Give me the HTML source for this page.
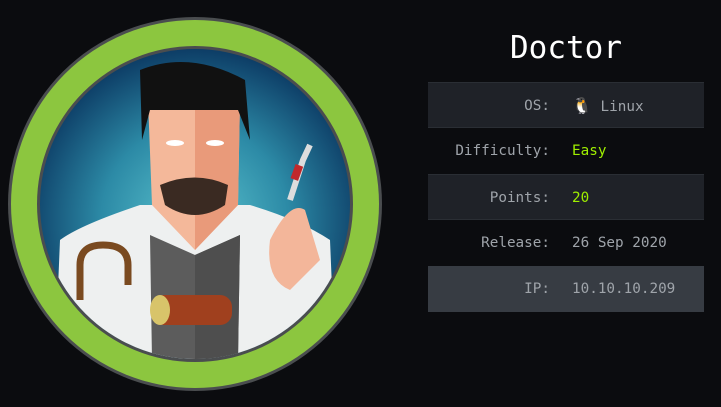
<!DOCTYPE html>
<html><head><style>
body{margin:0;width:721px;height:407px;background:#0b0c0f;overflow:hidden;font-family:"DejaVu Sans Mono","Liberation Mono",monospace;}
.t{position:absolute;left:428px;width:276px;text-align:center;top:30px;font-size:31px;color:#fff;}
.row{position:absolute;left:428px;width:276px;height:46px;font-size:14.3px;line-height:46px;color:#9fa4aa}
.row .l{position:absolute;right:154px;}
.row .v{position:absolute;left:144px;}
.g{color:#9fef00}
.d{background:#1f2228;border-top:1px solid #2a2e34;border-bottom:1px solid #2a2e34;box-sizing:border-box}
</style></head><body>
<svg width="400" height="407" style="position:absolute;left:0;top:0">
<defs>
<radialGradient id="bg" cx="50%" cy="55%" r="55%"><stop offset="0" stop-color="#5cc4cf"/><stop offset="0.55" stop-color="#2c8aa6"/><stop offset="1" stop-color="#0d3d66"/></radialGradient>
<clipPath id="c"><circle cx="195" cy="204" r="155"/></clipPath>
</defs>
<circle cx="195" cy="204" r="187" fill="#4a4d4f"/>
<circle cx="195" cy="204" r="184" fill="#8cc63f"/>
<circle cx="195" cy="204" r="158" fill="#4a4d4f"/>
<circle cx="195" cy="204" r="155" fill="url(#bg)"/>
<g clip-path="url(#c)">
<path d="M55 360 L60 240 Q80 225 140 205 L250 205 Q300 220 330 240 L335 360Z" fill="#eef0f0"/>
<path d="M150 235 L195 255 L240 235 L238 360 L152 360Z" fill="#5c5c5c"/>
<path d="M195 255 L240 235 L238 360 L195 360Z" fill="#4e4e4e"/>
<path d="M148 100 L240 100 L238 205 L195 250 L152 205Z" fill="#f4b89a"/>
<path d="M195 100 L240 100 L238 205 L195 250Z" fill="#e99a7a"/>
<path d="M140 70 Q190 50 245 80 L250 140 L238 110 L150 110 L142 140Z" fill="#111"/>
<path d="M160 185 Q195 170 228 185 L225 205 Q195 225 165 205Z" fill="#3a2a22"/>
<ellipse cx="175" cy="143" rx="9" ry="3" fill="#fff"/>
<ellipse cx="215" cy="143" rx="9" ry="3" fill="#fff"/>
<path d="M80 300 L80 265 Q80 245 103 245 Q128 245 128 265 L128 285" stroke="#7a4a20" stroke-width="7" fill="none"/>
<rect x="152" y="295" width="80" height="30" rx="12" fill="#a0401e"/>
<ellipse cx="160" cy="310" rx="10" ry="15" fill="#d8c46a"/>
<path d="M270 240 Q290 200 305 210 L320 260 L290 290 Q265 280 270 240Z" fill="#f3b69a"/>
<path d="M290 200 L303 160 L310 145" stroke="#ddd" stroke-width="6"/>
<rect x="293" y="165" width="8" height="15" fill="#c0282b" transform="rotate(20 297 172)"/>
</g>
</svg>
<div class="t">Doctor</div>
<div class="row d" style="top:82px"><span class="l">OS:</span><span class="v"><span style="font-size:16px">🐧</span>&nbsp;Linux</span></div>
<div class="row" style="top:128px"><span class="l">Difficulty:</span><span class="v g">Easy</span></div>
<div class="row d" style="top:174px"><span class="l">Points:</span><span class="v g">20</span></div>
<div class="row" style="top:220px"><span class="l">Release:</span><span class="v">26 Sep 2020</span></div>
<div class="row" style="top:266px;background:#373c43"><span class="l">IP:</span><span class="v">10.10.10.209</span></div>
</body></html>
